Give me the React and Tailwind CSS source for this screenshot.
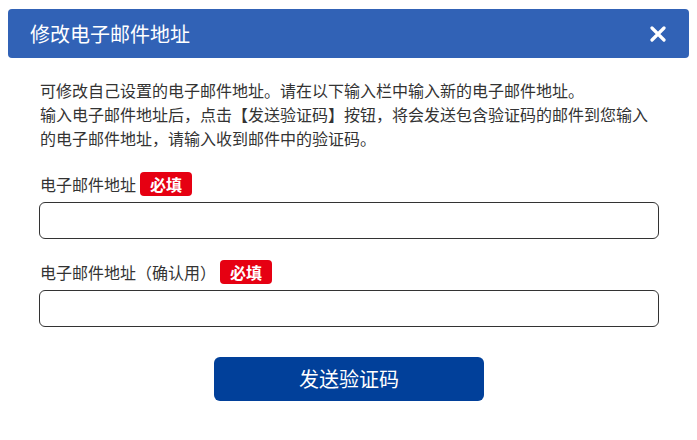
import React from 'react';

function Badge() {
    return (
        <span className="inline-flex items-center h-6 px-[10px] rounded-[4px] bg-[#e60012] text-white font-bold text-[16px] leading-none">
            必填
        </span>
    );
}

export default function App() {
    return (
        <div
            className="w-[697px] h-[440px] bg-white text-[#333] overflow-hidden"
            style={{ fontFamily: '"Noto Sans CJK SC", "Noto Sans", sans-serif' }}
        >
            <div className="pt-[9px] px-2">
                <div className="h-[49px] bg-[#3162b6] rounded-[4px] flex items-center justify-between pl-[22px] pr-[23px]">
                    <h1 className="text-white text-[20px] font-normal leading-none">修改电子邮件地址</h1>
                    <svg width="16" height="16" viewBox="0 0 16 16" className="text-white">
                        <path d="M2 2L14 14M14 2L2 14" stroke="currentColor" strokeWidth="3.2" strokeLinecap="round" />
                    </svg>
                </div>
            </div>

            <div className="pl-[39px] pr-[38px]">
                <p className="mt-[20px] pl-px text-[16px] leading-[24px]">
                    可修改自己设置的电子邮件地址。请在以下输入栏中输入新的电子邮件地址。
                    <br />
                    输入电子邮件地址后，点击【发送验证码】按钮，将会发送包含验证码的邮件到您输入的电子邮件地址，请输入收到邮件中的验证码。
                </p>

                <div className="mt-[22px] pl-px flex items-center gap-1 text-[16px]">
                    <span>电子邮件地址</span>
                    <Badge />
                </div>
                <input type="email" className="mt-[6px] block w-full h-[37px] border border-[#333] rounded-[6px] px-3 outline-none" />

                <div className="mt-[21px] pl-px flex items-center gap-1 text-[16px]">
                    <span>电子邮件地址（确认用）</span>
                    <Badge />
                </div>
                <input type="email" className="mt-[6px] block w-full h-[37px] border border-[#333] rounded-[6px] px-3 outline-none" />

                <div className="mt-[30px] flex justify-center">
                    <button className="w-[270px] h-[44px] rounded-[6px] bg-[#01409a] text-white text-[20px] leading-none">
                        发送验证码
                    </button>
                </div>
            </div>
        </div>
    );
}
